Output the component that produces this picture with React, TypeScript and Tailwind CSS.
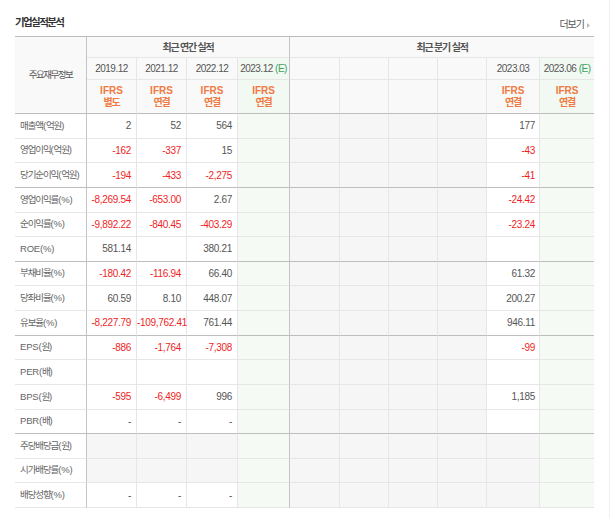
import React from "react";

type Row = { label: string; a: string[]; q: string; gray?: boolean; qGray?: boolean; sep?: boolean };

const rows: Row[] = [
  { label: "매출액(억원)", a: ["2", "52", "564"], q: "177" },
  { label: "영업이익(억원)", a: ["-162", "-337", "15"], q: "-43" },
  { label: "당기순이익(억원)", a: ["-194", "-433", "-2,275"], q: "-41", sep: true },
  { label: "영업이익률(%)", a: ["-8,269.54", "-653.00", "2.67"], q: "-24.42" },
  { label: "순이익률(%)", a: ["-9,892.22", "-840.45", "-403.29"], q: "-23.24" },
  { label: "ROE(%)", a: ["581.14", "", "380.21"], q: "", sep: true },
  { label: "부채비율(%)", a: ["-180.42", "-116.94", "66.40"], q: "61.32" },
  { label: "당좌비율(%)", a: ["60.59", "8.10", "448.07"], q: "200.27" },
  { label: "유보율(%)", a: ["-8,227.79", "-109,762.41", "761.44"], q: "946.11", sep: true },
  { label: "EPS(원)", a: ["-886", "-1,764", "-7,308"], q: "-99" },
  { label: "PER(배)", a: ["", "", ""], q: "" },
  { label: "BPS(원)", a: ["-595", "-6,499", "996"], q: "1,185" },
  { label: "PBR(배)", a: ["-", "-", "-"], q: "", sep: true },
  { label: "주당배당금(원)", a: ["", "", ""], q: "", gray: true, qGray: true },
  { label: "시가배당률(%)", a: ["", "", ""], q: "", gray: true, qGray: true },
  { label: "배당성향(%)", a: ["-", "-", "-"], q: "", qGray: true },
];

const isNeg = (v: string) => v.length > 1 && v.startsWith("-");

function Num({ v }: { v: string }) {
  return <span className={isNeg(v) ? "text-[#f01e1e]" : "text-[#555]"}>{v}</span>;
}

function Label({ text }: { text: string }) {
  const parts = text.split(/([\uAC00-\uD7A3]+)/).filter((p) => p.length > 0);
  return (
    <>
      {parts.map((p, i) =>
        /[\uAC00-\uD7A3]/.test(p) ? (
          <span key={i} className="tracking-[-1.1px]">{p}</span>
        ) : (
          <span key={i} className="tracking-[-0.2px]">{p}</span>
        )
      )}
    </>
  );
}

function Ifrs({ kind }: { kind: string }) {
  return (
    <div className="flex flex-col items-center text-[10px] leading-[12px] font-bold text-[#f07a40]">
      <span>IFRS</span>
      <span className="tracking-[-1.2px]">{kind}</span>
    </div>
  );
}

export default function App() {
  return (
    <div className="w-[611px] h-[518px] bg-white font-['Liberation_Sans','Noto_Sans_CJK_KR',sans-serif]">
      <div className="w-[610px] h-[518px] border-r border-r-[#f0f0f0] pl-[15px]">
        <div className="w-[579px] h-[36px] flex justify-between items-start">
          <h2 className="pt-[16px] text-[10.5px] leading-[13px] font-bold text-[#333] tracking-[-1.6px]">
            기업실적분석
          </h2>
          <div className="mt-[19px] mr-[4px] flex items-center gap-[3px] text-[10px] leading-[12px] text-[#555] tracking-[-1px]">
            <span>더보기</span>
            <svg width="3" height="5" viewBox="0 0 3 5">
              <path d="M0 0 L3 2.5 L0 5 Z" fill="#bbb" />
            </svg>
          </div>
        </div>
        <table className="w-[579px] table-fixed border-separate border-spacing-0">
          <colgroup>
            <col className="w-[72px]" />
            <col className="w-[50px]" />
            <col className="w-[50px]" />
            <col className="w-[51px]" />
            <col className="w-[52px]" />
            <col className="w-[50px]" />
            <col className="w-[49px]" />
            <col className="w-[49px]" />
            <col className="w-[49px]" />
            <col className="w-[53px]" />
            <col className="w-[54px]" />
          </colgroup>
          <thead>
            <tr className="h-[22px]">
              <td
                rowSpan={3}
                className="bg-[#f9f9f9] border-t border-t-[#bdbdbd] border-r border-r-[#c4c4c4] border-b border-b-[#bdbdbd] text-center text-[9.5px] tracking-[-1.5px] text-[#555]"
              >
                주요재무정보
              </td>
              <td
                colSpan={4}
                className="bg-[#f9f9f9] border-t border-t-[#bdbdbd] border-r border-r-[#c4c4c4] border-b border-b-[#e6e6e6] text-center text-[10px] font-bold tracking-[-1.2px] text-[#555]"
              >
                최근 연간 실적
              </td>
              <td
                colSpan={6}
                className="bg-[#f9f9f9] border-t border-t-[#bdbdbd] border-b border-b-[#e6e6e6] text-center text-[10px] font-bold tracking-[-1.2px] text-[#555]"
              >
                최근 분기 실적
              </td>
            </tr>
            <tr className="h-[22px] text-[10px] tracking-[-0.5px] text-[#555] text-center">
              <td className="bg-[#f9f9f9] border-r border-r-[#e6e6e6] border-b border-b-[#e6e6e6]">2019.12</td>
              <td className="bg-[#f9f9f9] border-r border-r-[#e6e6e6] border-b border-b-[#e6e6e6]">2021.12</td>
              <td className="bg-[#f9f9f9] border-r border-r-[#e6e6e6] border-b border-b-[#e6e6e6]">2022.12</td>
              <td className="bg-[#f2f8f2] border-r border-r-[#c4c4c4] border-b border-b-[#e6e6e6] whitespace-nowrap">
                2023.12 <span className="text-[#3aa35a]">(E)</span>
              </td>
              <td className="bg-[#f9f9f9] border-r border-r-[#e6e6e6] border-b border-b-[#e6e6e6]"></td>
              <td className="bg-[#f9f9f9] border-r border-r-[#e6e6e6] border-b border-b-[#e6e6e6]"></td>
              <td className="bg-[#f9f9f9] border-r border-r-[#e6e6e6] border-b border-b-[#e6e6e6]"></td>
              <td className="bg-[#f9f9f9] border-r border-r-[#e6e6e6] border-b border-b-[#e6e6e6]"></td>
              <td className="bg-[#f9f9f9] border-r border-r-[#e6e6e6] border-b border-b-[#e6e6e6]">2023.03</td>
              <td className="bg-[#f2f8f2] border-b border-b-[#e6e6e6] whitespace-nowrap">
                2023.06 <span className="text-[#3aa35a]">(E)</span>
              </td>
            </tr>
            <tr className="h-[34px]">
              <td className="bg-[#f9f9f9] border-r border-r-[#e6e6e6] border-b border-b-[#bdbdbd]"><Ifrs kind="별도" /></td>
              <td className="bg-[#f9f9f9] border-r border-r-[#e6e6e6] border-b border-b-[#bdbdbd]"><Ifrs kind="연결" /></td>
              <td className="bg-[#f9f9f9] border-r border-r-[#e6e6e6] border-b border-b-[#bdbdbd]"><Ifrs kind="연결" /></td>
              <td className="bg-[#f2f8f2] border-r border-r-[#c4c4c4] border-b border-b-[#bdbdbd]"><Ifrs kind="연결" /></td>
              <td className="bg-[#f9f9f9] border-r border-r-[#e6e6e6] border-b border-b-[#bdbdbd]"></td>
              <td className="bg-[#f9f9f9] border-r border-r-[#e6e6e6] border-b border-b-[#bdbdbd]"></td>
              <td className="bg-[#f9f9f9] border-r border-r-[#e6e6e6] border-b border-b-[#bdbdbd]"></td>
              <td className="bg-[#f9f9f9] border-r border-r-[#e6e6e6] border-b border-b-[#bdbdbd]"></td>
              <td className="bg-[#f9f9f9] border-r border-r-[#e6e6e6] border-b border-b-[#bdbdbd]"><Ifrs kind="연결" /></td>
              <td className="bg-[#f2f8f2] border-b border-b-[#bdbdbd]"><Ifrs kind="연결" /></td>
            </tr>
          </thead>
          <tbody>
            {rows.map((r, i) => {
              const last = i === rows.length - 1;
              const bb = r.sep && !last ? "border-b border-b-[#bdbdbd]" : "border-b border-b-[#e6e6e6]";
              return (
                <tr key={i} className="h-[24.625px] text-[10px] tracking-[-0.3px] text-right">
                  <td className={`${bb} border-r border-r-[#c4c4c4] bg-white pl-[5px] text-left text-[9.5px] text-[#666] whitespace-nowrap`}>
                    <Label text={r.label} />
                  </td>
                  {r.a.map((v, j) => (
                    <td
                      key={j}
                      className={`${bb} border-r border-r-[#e6e6e6] ${r.gray ? "bg-[#f6f6f6]" : "bg-white"} pr-[5px] whitespace-nowrap`}
                    >
                      <Num v={v} />
                    </td>
                  ))}
                  <td className={`${bb} border-r border-r-[#c4c4c4] bg-[#f5faf5]`}></td>
                  <td className={`${bb} border-r border-r-[#e6e6e6] bg-[#f6f6f6]`}></td>
                  <td className={`${bb} border-r border-r-[#e6e6e6] bg-[#f6f6f6]`}></td>
                  <td className={`${bb} border-r border-r-[#e6e6e6] bg-[#f6f6f6]`}></td>
                  <td className={`${bb} border-r border-r-[#e6e6e6] bg-[#f6f6f6]`}></td>
                  <td className={`${bb} border-r border-r-[#e6e6e6] ${r.qGray ? "bg-[#f6f6f6]" : "bg-white"} pr-[4px] whitespace-nowrap`}>
                    <Num v={r.q} />
                  </td>
                  <td className={`${bb} bg-[#f5faf5]`}></td>
                </tr>
              );
            })}
          </tbody>
        </table>
      </div>
    </div>
  );
}
